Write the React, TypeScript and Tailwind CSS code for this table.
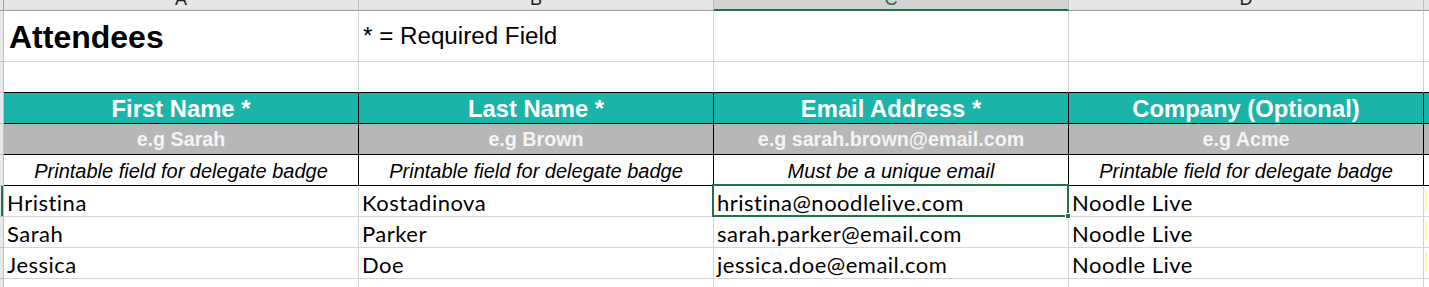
import React from "react";

const ARIAL = "font-['Liberation_Sans',Arial,sans-serif]";
const BODY = "font-['Lato','Open_Sans',sans-serif]";

const columns = [
  { key: "A", title: "First Name *", example: "e.g Sarah", note: "Printable field for delegate badge" },
  { key: "B", title: "Last Name *", example: "e.g Brown", note: "Printable field for delegate badge" },
  { key: "C", title: "Email Address *", example: "e.g sarah.brown@email.com", note: "Must be a unique email" },
  { key: "D", title: "Company (Optional)", example: "e.g Acme", note: "Printable field for delegate badge" },
];

const attendees = [
  ["Hristina", "Kostadinova", "hristina@noodlelive.com", "Noodle Live"],
  ["Sarah", "Parker", "sarah.parker@email.com", "Noodle Live"],
  ["Jessica", "Doe", "jessica.doe@email.com", "Noodle Live"],
];

function RowHead({ active = false }: { active?: boolean }) {
  return (
    <div className="flex justify-end border-r border-b border-[#bfbfbf] bg-[#e9e9e9]">
      {active && <div className="w-[2px] bg-[#217346]" />}
    </div>
  );
}

function Selection() {
  return (
    <div className="pointer-events-none absolute -top-[2px] -left-[2px] -right-[1px] -bottom-[1px] z-10 border-2 border-[#217346]">
      <div className="absolute -right-[4px] -bottom-[4px] h-[6px] w-[6px] border border-white bg-[#217346]" />
    </div>
  );
}

export default function App() {
  return (
    <div className="h-[287px] w-[1429px] overflow-hidden bg-white">
      <div className="grid grid-cols-[4px_355px_355px_355px_355px_1fr] grid-rows-[11px_51px_31px_31px_31px_31px_31px_31px_31px_31px]">
        {/* column letters, only their lower edge is in view */}
        <div className="border-r border-b border-[#9e9e9e] bg-[#e6e6e6]" />
        {columns.map((c) => {
          const sel = c.key === "C";
          return (
            <div
              key={c.key}
              className={`flex justify-center overflow-hidden border-r border-[#bdbdbd] ${
                sel ? "border-b-2 border-b-[#217346] bg-[#d2d2d2] text-[#217346]" : "border-b border-b-[#9e9e9e] bg-[#e6e6e6] text-[#222]"
              }`}
            >
              <span className={`${ARIAL} -mt-[9px] self-start text-[18px] leading-[17px]`}>{c.key}</span>
            </div>
          );
        })}
        <div className="border-b border-[#9e9e9e] bg-[#e6e6e6]" />

        {/* row 1 */}
        <RowHead />
        <div className={`${ARIAL} flex items-center border-r border-b border-[#d4d4d4] pl-[5px] pt-[2px] text-[32px] font-bold text-black`}>
          Attendees
        </div>
        <div className={`${ARIAL} flex items-center border-r border-b border-[#d4d4d4] pl-[4px] pt-[1px] text-[24.2px] text-black`}>
          * = Required Field
        </div>
        <div className="border-r border-b border-[#d4d4d4]" />
        <div className="border-r border-b border-[#d4d4d4]" />
        <div className="border-b border-[#d4d4d4]" />

        {/* row 2 */}
        <RowHead />
        {columns.map((c) => (
          <div key={c.key} className="border-r border-b border-r-[#d4d4d4] border-b-black" />
        ))}
        <div className="border-b border-black" />

        {/* headings */}
        <RowHead />
        {columns.map((c) => (
          <div
            key={c.key}
            className={`${ARIAL} flex items-center justify-center border-r border-b border-black bg-[#1ab5a8] pt-[2px] text-[23.8px] font-bold text-white`}
          >
            {c.title}
          </div>
        ))}
        <div className="border-b border-black bg-[#1ab5a8]" />

        <RowHead />
        {columns.map((c) => (
          <div
            key={c.key}
            className={`${ARIAL} flex items-center justify-center border-r border-b border-black bg-[#b7b7b7] pt-[1px] text-[19.7px] font-bold text-[#f4f4f4]`}
          >
            {c.example}
          </div>
        ))}
        <div className="border-b border-black bg-[#b7b7b7]" />

        <RowHead />
        {columns.map((c) => (
          <div
            key={c.key}
            className={`${ARIAL} flex items-center justify-center border-r border-b border-black pt-[1px] text-[20px] italic text-black`}
          >
            {c.note}
          </div>
        ))}
        <div className="border-b border-black" />

        {/* attendees */}
        {attendees.map((row, i) => (
          <React.Fragment key={i}>
            <RowHead active={i === 0} />
            {row.map((v, j) => (
              <div
                key={j}
                className={`${BODY} relative flex items-end border-r border-b border-[#d4d4d4] pb-[2px] pl-[3px] text-[22px] leading-none tracking-[0.5px] text-black`}
              >
                {v}
                {i === 0 && j === 2 && <Selection />}
              </div>
            ))}
            <div className="flex border-b border-[#d4d4d4] pt-[4px] pb-[6px] pl-[1px]">
              <div className="w-[2px] bg-[#fff7a8]" />
            </div>
          </React.Fragment>
        ))}

        {/* partial row */}
        <RowHead />
        <div className="border-r border-[#d4d4d4]" />
        <div className="border-r border-[#d4d4d4]" />
        <div className="border-r border-[#d4d4d4]" />
        <div className="border-r border-[#d4d4d4]" />
        <div />
      </div>
    </div>
  );
}
